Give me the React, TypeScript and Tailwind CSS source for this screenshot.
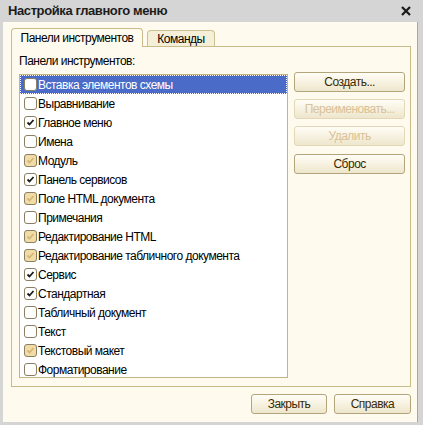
import React from 'react';

type State = 'off' | 'on' | 'mixed';

const items: { label: string; state: State }[] = [
  { label: 'Вставка элементов схемы', state: 'off' },
  { label: 'Выравнивание', state: 'off' },
  { label: 'Главное меню', state: 'on' },
  { label: 'Имена', state: 'off' },
  { label: 'Модуль', state: 'mixed' },
  { label: 'Панель сервисов', state: 'on' },
  { label: 'Поле HTML документа', state: 'mixed' },
  { label: 'Примечания', state: 'off' },
  { label: 'Редактирование HTML', state: 'mixed' },
  { label: 'Редактирование табличного документа', state: 'mixed' },
  { label: 'Сервис', state: 'on' },
  { label: 'Стандартная', state: 'on' },
  { label: 'Табличный документ', state: 'off' },
  { label: 'Текст', state: 'off' },
  { label: 'Текстовый макет', state: 'mixed' },
  { label: 'Форматирование', state: 'off' },
];

function Check({ state }: { state: State }) {
  const fill = state === 'mixed' ? 'bg-[#f2dca6]' : 'bg-white';
  return (
    <span className={`flex h-[13px] w-[13px] shrink-0 items-center justify-center rounded-[3px] border border-[#8a7f62] ${fill}`}>
      {state !== 'off' && (
        <svg width="9" height="9" viewBox="0 0 9 9">
          <path
            d="M1.5 4.5 L3.5 6.5 L7.5 2"
            fill="none"
            stroke={state === 'on' ? '#1a1a1a' : '#d4b679'}
            strokeWidth="1.8"
          />
        </svg>
      )}
    </span>
  );
}

function Btn({ children, disabled, className = '' }: { children: React.ReactNode; disabled?: boolean; className?: string }) {
  return (
    <button
      className={`flex h-[20px] items-center justify-center rounded-[3px] border bg-gradient-to-b from-[#fffdf6] to-[#eee6cc] text-[12px] ${
        disabled ? 'border-[#e2d8b8] text-[#d9c196]' : 'border-[#b3a57a] text-[#3a2a05]'
      } ${className}`}
    >
      {children}
    </button>
  );
}

export default function App() {
  return (
    <div
      className="flex h-[425px] w-[423px] flex-col bg-[#d5d5d5] tracking-[-0.5px] text-black"
      style={{ fontFamily: '"Liberation Sans", Arial, sans-serif' }}
    >
      {/* title bar */}
      <div className="flex h-[22px] shrink-0 items-center justify-between pl-[8px] pr-[12px]">
        <span className="text-[13px] font-bold tracking-[-0.4px] text-[#1c1c1c]">Настройка главного меню</span>
        <svg width="10" height="10" viewBox="0 0 10 10">
          <path d="M1 1 L9 9 M9 1 L1 9" stroke="#1a1a1a" strokeWidth="2.2" />
        </svg>
      </div>

      <div className="ml-[3px] mr-[5px] mb-[3px] flex flex-1 flex-col border-r border-[#a8a8a8] bg-[#fefaee] pl-[8px] pr-[6px] pt-[6px]">
        {/* tabs */}
        <div className="flex items-end gap-[4px]">
          <div className="relative z-10 -mb-px flex h-[19px] w-[132px] items-center justify-center rounded-t-[4px] border border-b-0 border-[#c9bb8c] bg-[#fefaee] text-[12px]">
            Панели инструментов
          </div>
          <div className="flex h-[16px] w-[68px] items-center justify-center rounded-t-[4px] border border-b-0 border-[#cbbf94] bg-[#f6efd8] text-[12px]">
            Команды
          </div>
        </div>

        {/* panel */}
        <div className="flex h-[341px] flex-col border border-[#c9bb8c] pl-[7px] pr-[5px]">
          <div className="flex h-[27px] items-center pt-[1px] text-[12px]">Панели инструментов:</div>
          <div className="flex gap-[6px]">
            <div className="h-[304px] w-[270px] border border-[#c3b487] bg-white">
              {items.map((it, i) => (
                <div
                  key={it.label}
                  className={`flex h-[19px] items-center gap-[1px] pl-[4px] text-[12px] ${
                    i === 0 ? 'bg-[#4a6bc7] text-white outline-1 outline-dotted outline-white -outline-offset-1' : ''
                  }`}
                >
                  <Check state={it.state} />
                  <span className="whitespace-nowrap">{it.label}</span>
                </div>
              ))}
            </div>
            <div className="flex w-[111px] flex-col">
              <Btn className="mt-[-2px]">Создать...</Btn>
              <Btn disabled className="mt-[7px]">Переименовать...</Btn>
              <Btn disabled className="mt-[7px]">Удалить</Btn>
              <Btn className="mt-[8px]">Сброс</Btn>
            </div>
          </div>
        </div>

        {/* footer */}
        <div className="flex justify-end gap-[7px] pt-[7px]">
          <Btn className="w-[76px]">Закрыть</Btn>
          <Btn className="w-[77px]">Справка</Btn>
        </div>
      </div>
    </div>
  );
}
